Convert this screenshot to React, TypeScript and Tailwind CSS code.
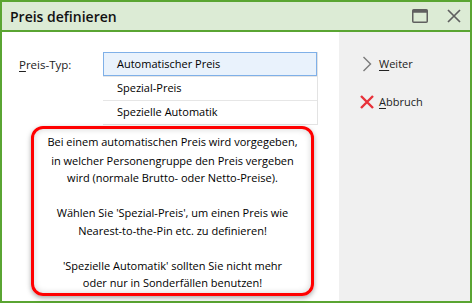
export default function App() {
  const items = ["Automatischer Preis", "Spezial-Preis", "Spezielle Automatik"];
  return (
    <div
      className="w-[472px] h-[303px] border-2 border-[#5aa532] flex flex-col bg-white text-[#000]"
      style={{ fontFamily: '"Open Sans", "Noto Sans", sans-serif' }}
    >
      <div className="h-[30px] shrink-0 bg-[#dcebd5] border-b-2 border-[#5aa532] flex items-center pl-[8px] pr-[8px]">
        <span className="text-[14px] font-semibold text-[#111]">Preis definieren</span>
        <div className="ml-auto flex items-center gap-[19px] pr-[1px]">
          <svg width="16" height="14" viewBox="0 0 16 14">
            <rect x="0.75" y="0.75" width="14.5" height="12.5" rx="1" fill="none" stroke="#5f5f5f" strokeWidth="1.5" />
            <rect x="0.75" y="0.75" width="14.5" height="3" fill="#5f5f5f" />
          </svg>
          <svg width="14" height="14" viewBox="0 0 14 14">
            <path d="M1 1 L13 13 M13 1 L1 13" stroke="#5f5f5f" strokeWidth="1.7" />
          </svg>
        </div>
      </div>
      <div className="flex flex-1 min-h-0">
        <div className="flex-1 flex flex-col pt-[20px]">
          <div className="flex pl-[17px]">
            <div className="w-[84px] text-[11.5px] pt-[4px] text-[#222]">
              <span className="underline underline-offset-2">P</span>reis-Typ:
            </div>
            <div className="w-[215px] border-r border-b border-[#e3e3e3] text-[11px]">
              {items.map((t, i) => (
                <div
                  key={t}
                  className={
                    i === 0
                      ? "h-[24px] flex items-center pl-[13px] bg-[#e9f2fc] border border-[#7fb0e8]"
                      : "h-[24px] flex items-center pl-[14px] border-t border-[#e6e6e6]"
                  }
                >
                  {t}
                </div>
              ))}
            </div>
          </div>
          <div className="ml-[29px] mt-[1px] w-[283px] h-[170px] rounded-[12px] border-[3px] border-[#ff0000] shadow-[0_2px_5px_rgba(0,0,0,0.35),inset_0_0_6px_rgba(0,0,0,0.18)] flex flex-col items-center pt-[4px] text-[11px] leading-[17.5px] text-center text-[#000]">
            <div className="mb-[1px]">Bei einem automatischen Preis wird vorgegeben,</div>
            <div>in welcher Personengruppe den Preis vergeben</div>
            <div>wird (normale Brutto- oder Netto-Preise).</div>
            <div className="h-[17.5px]" />
            <div>Wählen Sie 'Spezial-Preis', um einen Preis wie</div>
            <div>Nearest-to-the-Pin etc. zu definieren!</div>
            <div className="h-[17.5px]" />
            <div>'Spezielle Automatik' sollten Sie nicht mehr</div>
            <div>oder nur in Sonderfällen benutzen!</div>
          </div>
        </div>
        <div className="w-[131px] shrink-0 bg-[#f0f0f0] flex flex-col pt-[23px] pl-[21px] text-[11px] text-[#222]">
          <div className="flex items-center h-[18px]">
            <svg width="10" height="16" viewBox="0 0 10 16" className="ml-[2px] mr-[7px]">
              <path d="M1.5 1 L8.5 8 L1.5 15" fill="none" stroke="#7a7a7a" strokeWidth="1.4" />
            </svg>
            <span>
              <span className="underline underline-offset-2">W</span>eiter
            </span>
          </div>
          <div className="flex items-center h-[18px] mt-[20px]">
            <svg width="14" height="14" viewBox="0 0 14 14" className="mr-[5px]">
              <path d="M1 1 L13 13 M13 1 L1 13" stroke="#e8323a" strokeWidth="2.4" />
            </svg>
            <span>
              <span className="underline underline-offset-2">A</span>bbruch
            </span>
          </div>
        </div>
      </div>
    </div>
  );
}
